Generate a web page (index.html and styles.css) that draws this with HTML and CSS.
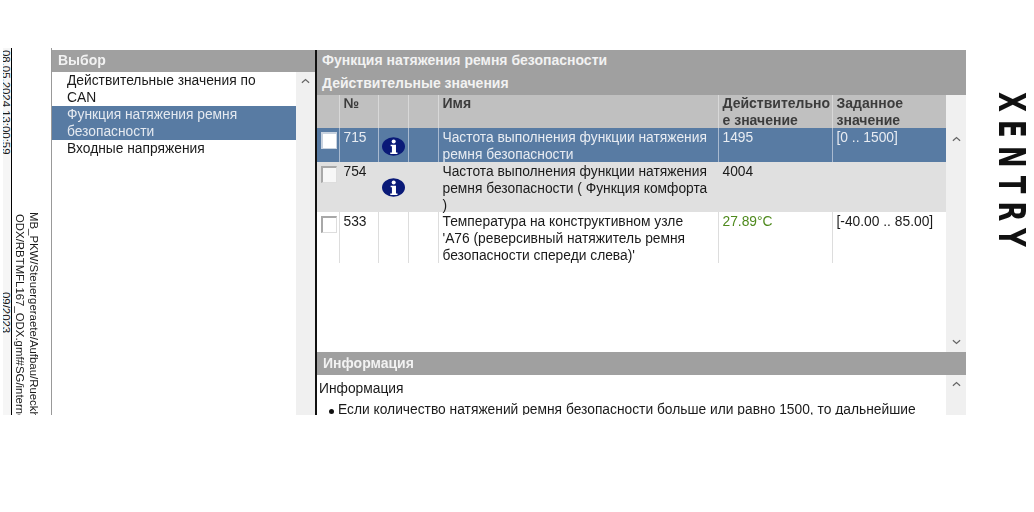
FILE: index.html
```html
<!DOCTYPE html>
<html lang="ru">
<head>
<meta charset="utf-8">
<title>Xentry</title>
<link rel="stylesheet" href="styles.css">
</head>
<body>
<div class="page">
  <div class="app">
    <div class="strip-date">
      <span>08.05.2024 13:00:59</span>
      <span>09/2023</span>
    </div>
    <div class="strip-path">
      <p>MB_PKW/Steuergeraete/Aufbau/Rueckhaltesysteme</p>
      <p class="path-two">ODX/RBTMFL167_ODX.gmf#SG/interne/Daten</p>
    </div>
    <section class="left">
      <h2 class="bar bar-left">Выбор</h2>
      <div class="left-body">
        <ul class="menu">
          <li>Действительные значения по CAN</li>
          <li class="sel">Функция натяжения ремня безопасности</li>
          <li>Входные напряжения</li>
        </ul>
        <div class="scroll">
          <svg class="chev" viewBox="0 0 10 6"><path d="M1 5 5 1.5 9 5"/></svg>
        </div>
      </div>
    </section>
    <section class="right">
      <div class="titles">
        <h2>Функция натяжения ремня безопасности</h2>
        <h3>Действительные значения</h3>
      </div>
      <div class="table-wrap">
        <table class="grid">
          <colgroup>
            <col class="c-check"><col class="c-no"><col class="c-icon"><col class="c-empty"><col class="c-name"><col class="c-val"><col class="c-val">
          </colgroup>
          <thead>
            <tr>
              <th></th><th>№</th><th></th><th></th><th>Имя</th><th class="nowrap">Действительно<br>е значение</th><th>Заданное значение</th>
            </tr>
          </thead>
          <tbody>
            <tr class="r-sel">
              <td class="chk"><span class="box"></span></td><td>715</td>
              <td class="ic"><svg class="info" viewBox="0 0 25 20"><ellipse cx="12.5" cy="10" rx="12.5" ry="10" fill="#0a1a78"/><circle cx="12.7" cy="4.6" r="2.2" fill="#fff"/><path d="M9.4 8h5.8v8.4h1.6v1.8H9v-1.8h1.8V9.8H9.4z" fill="#fff"/></svg></td>
              <td></td><td><div class="name">Частота выполнения функции натяжения ремня безопасности</div></td><td>1495</td><td>[0 .. 1500]</td>
            </tr>
            <tr class="r-alt">
              <td class="chk"><span class="box"></span></td><td>754</td>
              <td class="ic"><svg class="info" viewBox="0 0 25 20"><ellipse cx="12.5" cy="10" rx="12.5" ry="10" fill="#0a1a78"/><circle cx="12.7" cy="4.6" r="2.2" fill="#fff"/><path d="M9.4 8h5.8v8.4h1.6v1.8H9v-1.8h1.8V9.8H9.4z" fill="#fff"/></svg></td>
              <td></td><td><div class="name">Частота выполнения функции натяжения ремня безопасности ( Функция комфорта )</div></td><td>4004</td><td></td>
            </tr>
            <tr class="r-plain">
              <td class="chk"><span class="box"></span></td><td>533</td><td></td>
              <td></td><td><div class="name">Температура на конструктивном узле 'A76 (реверсивный натяжитель ремня безопасности спереди слева)'</div></td><td class="ok">27.89°C</td><td>[-40.00 .. 85.00]</td>
            </tr>
          </tbody>
        </table>
        <div class="scroll scroll-table">
          <svg class="chev" viewBox="0 0 10 6"><path d="M1 5 5 1.5 9 5"/></svg>
          <svg class="chev" viewBox="0 0 10 6"><path d="M1 1 5 4.5 9 1"/></svg>
        </div>
      </div>
      <h2 class="bar info-bar">Информация</h2>
      <div class="info-body">
        <div class="info-text">
          <p>Информация</p>
          <ul>
            <li>Если количество натяжений ремня безопасности больше или равно 1500, то дальнейшие</li>
          </ul>
        </div>
        <div class="scroll">
          <svg class="chev" viewBox="0 0 10 6"><path d="M1 5 5 1.5 9 5"/></svg>
        </div>
      </div>
    </section>
  </div>
  <div class="logo">XENTRY</div>
</div>
</body>
</html>
```
FILE: styles.css
```css
* { box-sizing: border-box; }
html, body { margin: 0; padding: 0; background: #fff; }
body { font-family: "Liberation Sans", Arial, sans-serif; font-size: 13.8px; line-height: 17px; color: #1a1a1a; overflow: hidden; }
h2, h3, p, ul { margin: 0; padding: 0; }
li { list-style: none; }

.page { display: flex; width: 1034px; height: 512px; filter: blur(0.35px); }
.app { display: flex; width: 966px; height: 415px; padding-top: 50px; overflow: hidden; flex: none; }

.strip-date {
  flex: none; width: 8px; margin: -2px 0 0 3px; height: 367px; overflow: hidden;
  writing-mode: vertical-rl; font-size: 11.4px; line-height: 10px; background: #f6f6f6;
  display: flex; flex-direction: row; gap: 137px; padding-top: 2px; align-items: flex-start; white-space: nowrap;
}
.strip-path {
  flex: none; width: 41px; margin-top: -2px; border-left: 1.5px solid #000; border-right: 1px solid #999;
  height: 367px; overflow: hidden; writing-mode: vertical-rl; padding: 164px 10px 0 0;
  font-size: 11.4px; line-height: 14.5px; white-space: nowrap;
}
.path-two { padding-inline-start: 2px; }

.bar { background: #a0a0a0; color: #f2f2f2; font-size: 14px; font-weight: 700; height: 23px; padding: 3px 6px; line-height: 17px; }
.bar-left { height: 22px; padding-top: 2px; flex: none; }

.left { flex: none; width: 263px; display: flex; flex-direction: column; }
.left-body { flex: 1; display: flex; min-height: 0; }
.menu { flex: 1; }
.menu li { padding: 0 20px 0 15px; line-height: 17px; }
.menu li.sel { background: #587ba3; color: #e4e9f0; }
.scroll { flex: none; width: 19px; background: #f0f0f0; display: flex; flex-direction: column; justify-content: space-between; align-items: center; padding: 6px 0; }
.chev { width: 9px; height: 6px; fill: none; stroke: #666; stroke-width: 1.4; }

.right { flex: 1; min-width: 0; border-left: 2px solid #111; display: flex; flex-direction: column; }
.titles { background: #a0a0a0; color: #f2f2f2; height: 45px; padding: 0 5px; font-weight: 700; flex: none; }
.titles h2 { font-size: 14px; line-height: 20px; }
.titles h3 { font-size: 14px; line-height: 22px; margin-top: 2px; }

.table-wrap { display: flex; height: 257px; flex: none; }
.grid { flex: none; width: 629px; table-layout: fixed; border-collapse: collapse; align-self: flex-start; }
.c-check { width: 22px; }
.c-no { width: 39px; }
.c-icon { width: 30px; }
.c-empty { width: 30px; }
.c-name { width: 280px; }
.c-val { width: 114px; }
.grid th, .grid td { text-align: left; vertical-align: top; padding: 0 4px; }
.grid td { font-size: 13.8px; line-height: 17px; padding-top: 1px; border-left: 1px solid #ddd; }
.name { margin-bottom: -3px; }
.grid th { background: #c0c0c0; color: #3c3c3c; font-size: 14px; line-height: 16.5px; font-weight: 700; height: 33px; border-left: 1px solid #d8d8d8; }
.grid th.nowrap { white-space: nowrap; padding-right: 0; }
.grid th:first-child, .grid td:first-child { border-left: 0; }
.r-sel td { background: #587ba3; color: #e8ecf2; height: 34px; border-left-color: #a9bad0; }
.r-alt td { background: #e0e0e0; height: 50px; border-left-color: #e0e0e0; }
.r-plain td { background: #fff; height: 51px; }
.ok { color: #4f8a1e; }
.grid td.chk { padding: 4px 0 0 4px; }
.box { display: block; width: 16px; height: 17px; background: #f7f7f7; border-top: 2px solid #a8a8a8; border-left: 2px solid #a8a8a8; border-bottom: 1px solid #ddd; border-right: 1px solid #ddd; }
.r-sel .box { background: #fff; border-color: #c8d2df; }
.r-plain .box { background: #fff; }
.grid td.ic { padding: 9px 0 0 3px; }
.r-alt td.ic { padding-top: 16px; }
.info { display: block; width: 23px; height: 19px; }
.scroll-table { width: 20px; padding: 41px 0 7px; }

.info-bar { flex: none; }
.info-body { flex: 1; display: flex; min-height: 0; }
.info-text { flex: 1; min-width: 0; padding: 5px 0 0 2px; }
.info-text ul { margin-top: 4px; padding-left: 10px; }
.info-text li { position: relative; padding-left: 9px; white-space: nowrap; }
.info-text li::before { content: ""; position: absolute; left: 0; top: 8px; width: 5px; height: 5px; border-radius: 50%; background: #111; }
.info-body .scroll { width: 20px; padding-top: 6px; justify-content: flex-start; }

.logo {
  flex: none; margin: 92px 0 0 31px; height: 250px; writing-mode: vertical-rl;
  font-family: "DejaVu Sans", sans-serif; font-weight: 700; font-size: 38px; line-height: 30px; letter-spacing: 12px; color: #111;
  transform: scaleY(0.68); transform-origin: top;
}
```
